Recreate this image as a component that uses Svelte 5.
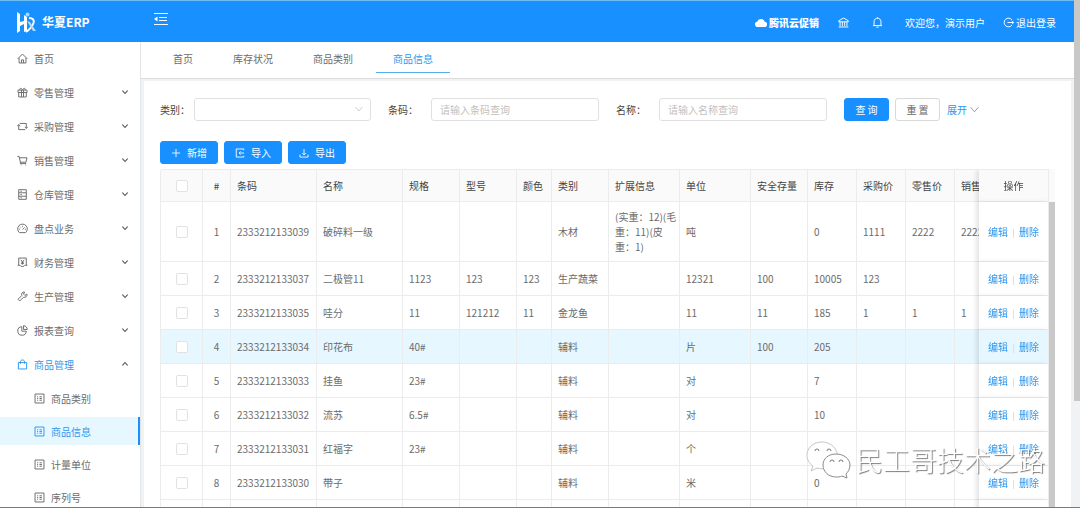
<script lang="ts">
  type Row = {
    code: string;
    name: string;
    spec?: string;
    model?: string;
    color?: string;
    category: string;
    extra?: string;
    unit: string;
    safe?: string;
    stock?: string;
    buy?: string;
    retail?: string;
    sale?: string;
  };

  const icons: Record<string, string> = {
    home: 'M1 8.5 8 1.5 15 8.5M3 7V14.5H13V7M6.5 14.5V10H9.5V14.5',
    gift: 'M1.5 4.5H14.5V8H1.5ZM2.5 8V14.5H13.5V8M6.5 4.5V14.5M9.5 4.5V14.5M8 4.5C7 1 3.5 1 4 4.5M8 4.5C9 1 12.5 1 12 4.5',
    retweet: 'M4 3.5H13.5V10M12 12.5H2.5V6M.5 7.5 2.5 5 4.5 7.5M11.5 8.5 13.5 11 15.5 8.5',
    cart: 'M.5 2H3L5 10.5H13L14.5 4H3.5M5 10.5 4.5 12.5H13.5M5.5 14.5H6.5M12 14.5H13',
    hdd: 'M2.5 1H13.5V15H2.5ZM2.5 5.5H13.5M2.5 10.5H13.5M5 3.3H7M5 8H7M5 12.8H7',
    dashboard: 'M3.5 14A7 7 0 1 1 12.5 14ZM8 9.5 11 6.5M3 9H4.5M11.5 9H13M8 4V5.5M4.5 5.5 5.5 6.5',
    account: 'M2.5 12V1.5H13.5V12M1 12H4.5C5 14.5 11 14.5 11.5 12H15M5.5 4 8 7 10.5 4M8 7V11M6 7.5H10M6 9.5H10',
    tool: 'M14.5 4.5 11.5 6.5 9.5 4.5 11 1.5C7.5 1 6 4 7 6.5L1.5 12 4 14.5 9.5 9C12.5 10 15 8 14.5 4.5Z',
    pie: 'M7 2.5A6.2 6.2 0 1 0 13.5 9H7ZM9.5 1V6.5H15C15 3.5 12.5 1 9.5 1Z',
    bag: 'M2 5H14V14.5H2ZM5 7V4C5 .5 11 .5 11 4V7',
    profile: 'M1.5 1.5H14.5V14.5H1.5ZM4.5 5.5H6M8 5.5H11.5M4.5 8H6M8 8H11.5M4.5 10.5H6M8 10.5H11.5',
    down: 'M1 4 8 12 15 4',
    up: 'M1 12 8 4 15 12',
    bank: 'M1 5.5 8 1.5 15 5.5V7H1ZM3 7V13M6.3 7V13M9.7 7V13M13 7V13M1 14.5H15',
    bell: 'M1.5 12.5H14.5M3 12.5V7C3 0 13 0 13 7V12.5M6.5 14.8H9.5M8 .5V2',
    logout: 'M13 4.2A6.3 6.3 0 1 0 13 11.8M6.5 8H15.5M13 5.5 15.5 8 13 10.5',
    plus: 'M8 1.5V14.5M1.5 8H14.5',
    import: 'M14 3.5V1.5H2V14.5H14V12.5M14.5 8H6.5M9 5.5 6.5 8 9 10.5',
    export: 'M8 1.5V11M5 8 8 11 11 8M1.5 10.5V14.5H14.5V10.5',
  };

  const menu = [
    { icon: 'gift', label: '零售管理' },
    { icon: 'retweet', label: '采购管理' },
    { icon: 'cart', label: '销售管理' },
    { icon: 'hdd', label: '仓库管理' },
    { icon: 'dashboard', label: '盘点业务' },
    { icon: 'account', label: '财务管理' },
    { icon: 'tool', label: '生产管理' },
    { icon: 'pie', label: '报表查询' },
    { icon: 'bag', label: '商品管理', children: ['商品类别', '商品信息', '计量单位', '序列号'] },
  ];

  const tabs = ['首页', '库存状况', '商品类别', '商品信息'];

  const columns: { key: keyof Row; title: string; width: number }[] = [
    { key: 'code', title: '条码', width: 86 },
    { key: 'name', title: '名称', width: 86 },
    { key: 'spec', title: '规格', width: 57 },
    { key: 'model', title: '型号', width: 57 },
    { key: 'color', title: '颜色', width: 35 },
    { key: 'category', title: '类别', width: 57 },
    { key: 'extra', title: '扩展信息', width: 71 },
    { key: 'unit', title: '单位', width: 71 },
    { key: 'safe', title: '安全存量', width: 57 },
    { key: 'stock', title: '库存', width: 49 },
    { key: 'buy', title: '采购价', width: 49 },
    { key: 'retail', title: '零售价', width: 49 },
    { key: 'sale', title: '销售价', width: 49 },
  ];

  const rows: Row[] = [
    { code: '2333212133039', name: '破碎料一级', category: '木材', extra: '(实重：12)(毛\n重：11)(皮\n重：1)', unit: '吨', stock: '0', buy: '1111', retail: '2222', sale: '2222' },
    { code: '2333212133037', name: '二极管11', spec: '1123', model: '123', color: '123', category: '生产蔬菜', unit: '12321', safe: '100', stock: '10005', buy: '123' },
    { code: '2333212133035', name: '哇分', spec: '11', model: '121212', color: '11', category: '金龙鱼', unit: '11', safe: '11', stock: '185', buy: '1', retail: '1', sale: '1' },
    { code: '2333212133034', name: '印花布', spec: '40#', category: '辅料', unit: '片', safe: '100', stock: '205' },
    { code: '2333212133033', name: '挂鱼', spec: '23#', category: '辅料', unit: '对', stock: '7' },
    { code: '2333212133032', name: '流苏', spec: '6.5#', category: '辅料', unit: '对', stock: '10' },
    { code: '2333212133031', name: '红福字', spec: '23#', category: '辅料', unit: '个' },
    { code: '2333212133030', name: '带子', spec: '', category: '辅料', unit: '米', stock: '0' },
  ];

  const activeTab = '商品信息';
  let hovered = $state(3);
</script>

{#snippet icon(name: string, size = 11)}
  <svg class="icon" width={size} height={size} viewBox="0 0 16 16" aria-hidden="true">
    <path d={icons[name]} />
  </svg>
{/snippet}

<div class="app">
  <div class="page">
    <header class="header">
      <div class="brand">
        <svg width="21" height="23" viewBox="0 0 21 23" aria-hidden="true">
          <path d="M1 1 4 3V11L8 10V4L11 6V20L8 21V13L4 15V20L1 22Z" fill="#fff" />
          <path d="M13 7C17 7 18.500 9 17.500 12C16 16 13 19 10 21" fill="none" stroke="#fff" stroke-width="2" />
          <path d="M11 10 14 11 20 20 17 20Z" fill="#b5d9fb" />
          <circle cx="11.500" cy="3.500" r="2" fill="#a6d6ff" />
        </svg>
        <h1>华夏ERP</h1>
      </div>
      <button class="bare fold" aria-label="收起菜单">
        <svg width="14" height="12" viewBox="0 0 14 12" aria-hidden="true">
          <path d="M0 .5H14M5 4.500H13M5 7.500H13M0 11.500H14" stroke="#fff" fill="none" />
          <path d="M3.500 3.500V8.500L0 6Z" fill="#fff" />
        </svg>
      </button>
      <nav class="user">
        <a class="promo" href="#promo">
          <svg width="12" height="9" viewBox="0 0 12 9" aria-hidden="true">
            <path d="M3 9A2.6 2.6 0 0 1 2.2 3.8 4 4 0 0 1 9.8 3.8 2.6 2.6 0 0 1 9.2 9Z" fill="#fff" />
          </svg>
          腾讯云促销
        </a>
        <a class="bank" href="#bank" aria-label="机构">{@render icon('bank')}</a>
        <button class="bare bell" aria-label="消息">{@render icon('bell')}</button>
        <span class="welcome">欢迎您，演示用户</span>
        <a class="logout" href="#logout">{@render icon('logout')}退出登录</a>
      </nav>
    </header>

    <div class="layout">
      <aside class="sider">
        <ul class="menu">
          <li class="root">
            <a class="item" href="#home">{@render icon('home')}<span>首页</span></a>
          </li>
          {#each menu as item}
            <li>
              <button class="bare item" class:open={item.children} aria-expanded={!!item.children}>
                {@render icon(item.icon)}
                <span>{item.label}</span>
                <i class="arrow">{@render icon(item.children ? 'up' : 'down', 6)}</i>
              </button>
              {#if item.children}
                <ul class="submenu">
                  {#each item.children as child}
                    <li>
                      <a class="item" class:selected={child === activeTab} href="#{child}">
                        {@render icon('profile')}<span>{child}</span>
                      </a>
                    </li>
                  {/each}
                </ul>
              {/if}
            </li>
          {/each}
        </ul>
      </aside>

      <main class="main">
        <nav class="tabs">
          {#each tabs as tab}
            <a class="tab" class:active={tab === activeTab} href="#{tab}">{tab}</a>
          {/each}
        </nav>

        <section class="card">
          <form class="search">
            <div class="field">
              <label class="short" for="category">类别：</label>
              <div class="select">
                <select id="category"><option></option></select>
                {@render icon('down', 8)}
              </div>
            </div>
            <div class="field">
              <label for="code">条码：</label>
              <input id="code" type="text" placeholder="请输入条码查询" />
            </div>
            <div class="field">
              <label for="name">名称：</label>
              <input id="name" type="text" placeholder="请输入名称查询" />
            </div>
            <div class="field actions">
              <button class="btn primary" type="button">查 询</button>
              <button class="btn" type="button">重 置</button>
              <a href="#more">展开{@render icon('down', 9)}</a>
            </div>
          </form>

          <div class="toolbar">
            <button class="btn primary">{@render icon('plus', 10)}新增</button>
            <button class="btn primary">{@render icon('import', 10)}导入</button>
            <button class="btn primary">{@render icon('export', 10)}导出</button>
          </div>

          <div class="table-box">
            <div class="table-scroll">
              <table>
                <colgroup>
                  <col style:width="42px" />
                  <col style:width="28px" />
                  {#each columns as col}
                    <col style:width="{col.width}px" />
                  {/each}
                  <col style:width="70px" />
                </colgroup>
                <thead>
                  <tr>
                    <th class="center"><input type="checkbox" aria-label="全选" /></th>
                    <th class="center">#</th>
                    {#each columns as col}
                      <th>{col.title}</th>
                    {/each}
                    <th class="center fixed">操作</th>
                  </tr>
                </thead>
                <tbody>
                  {#each rows as row, i}
                    <tr class:hover={hovered === i} onmouseenter={() => (hovered = i)}>
                      <td class="center"><input type="checkbox" aria-label={row.name} /></td>
                      <td class="center">{i + 1}</td>
                      {#each columns as col}
                        <td>{row[col.key] ?? ''}</td>
                      {/each}
                      <td class="center fixed">
                        <a href="#edit">编辑</a><i class="divider"></i><a href="#delete">删除</a>
                      </td>
                    </tr>
                  {/each}
                  <tr>
                    <td></td>
                    <td></td>
                    {#each columns as _}
                      <td></td>
                    {/each}
                    <td class="fixed"></td>
                  </tr>
                </tbody>
              </table>
            </div>
            <div class="table-bar"></div>
          </div>
        </section>
      </main>
    </div>
  </div>
  <div class="page-bar"><div class="thumb"></div></div>

  <div class="watermark">
    <svg width="46" height="38" viewBox="0 0 46 38" aria-hidden="true">
      <g fill="#fff" stroke="#8a8a8a" stroke-width="1">
        <path d="M16 1C7 1 1 7 1 14C1 19 3 22 7 25L5 30 11 27C14 28 17 28 20 27C32 25 33 15 30 9C27 4 22 1 16 1Z" stroke="#c4c4c4" />
        <path d="M30 13C22 13 17 18 17 24C17 31 23 36 30 36C32 36 34 36 36 35L41 37 40 33C42 31 44 28 44 24C44 18 38 13 30 13Z" />
      </g>
      <g fill="none" stroke="#777">
        <path d="M9 10a2 2 0 0 1 4 0M21 10a2 2 0 0 1 4 0M24 21a2 2 0 0 1 4 0M33 21a2 2 0 0 1 4 0" />
      </g>
    </svg>
    <span>民工哥技术之路</span>
  </div>
</div>

<style>
  :global(body) {
    margin: 0;
    background: #fff;
  }

  .app {
    --blue: #1890ff;
    --line: #ececec;
    position: relative;
    display: flex;
    height: 100vh;
    box-sizing: border-box;
    overflow: hidden;
    border-bottom: 1px solid #777b80;
    font: 10px/15px "Noto Sans CJK SC", "Noto Sans", sans-serif;
    color: #6b6b6b;
  }

  .app :global(*) {
    box-sizing: border-box;
  }

  a {
    color: inherit;
    text-decoration: none;
  }

  ul {
    list-style: none;
    margin: 0;
    padding: 0;
  }

  button,
  input,
  select {
    font: inherit;
    color: inherit;
  }

  .bare {
    padding: 0;
    border: 0;
    background: none;
    cursor: pointer;
  }

  .icon {
    flex: none;
    fill: none;
    stroke: currentColor;
    stroke-width: 1.4;
  }

  .page {
    flex: 1;
    min-width: 0;
    display: flex;
    flex-direction: column;
  }

  .page-bar {
    width: 6px;
    background: #f1f2f3;
  }

  .thumb {
    height: 79%;
    background: #c8c8c8;
  }

  /* header */
  .header {
    display: flex;
    align-items: center;
    height: 42px;
    flex: none;
    padding: 1px 18px 0 16px;
    border-top: 1px solid #6cbdf0;
    background: var(--blue);
    color: #fff;
  }

  .brand {
    display: flex;
    align-items: center;
    gap: 5px;
    width: 138px;
  }

  h1 {
    margin: 0;
    font-size: 12px;
    line-height: 20px;
    font-weight: 700;
  }

  .fold {
    display: flex;
    padding-bottom: 6px;
  }

  .user {
    display: flex;
    align-items: center;
    margin-left: auto;
  }

  .user a,
  .bell {
    display: flex;
    align-items: center;
  }

  .promo {
    gap: 2px;
    font-weight: 900;
  }

  .bank {
    margin-left: 19px;
  }

  .bell {
    margin: 0 22px 0 23px;
    color: #fff;
  }

  .welcome {
    margin-right: 18px;
  }

  .logout {
    gap: 2px;
  }

  .layout {
    flex: 1;
    min-height: 0;
    display: flex;
    background: #f0f2f3;
  }

  /* sidebar */
  .sider {
    width: 141px;
    flex: none;
    overflow: hidden;
    background: #fff;
    border-right: 1px solid #e3e6e8;
    margin-right: 3px;
  }

  .menu {
    padding-top: 2px;
  }

  .root {
    margin-bottom: 6px;
  }

  .item {
    display: flex;
    align-items: center;
    gap: 6px;
    width: 100%;
    height: 28px;
    margin-bottom: 6px;
    padding: 0 12px 0 17px;
    text-align: left;
  }

  .root .item {
    margin-bottom: 0;
  }

  .submenu .item {
    margin-bottom: 5px;
    padding-left: 34px;
  }

  .open {
    color: #2e97ee;
  }

  .selected {
    color: #2e97ee;
    background: #e6f7ff;
    border-right: 2px solid var(--blue);
  }

  .arrow {
    display: flex;
    margin-left: auto;
    color: #555;
  }

  .arrow .icon {
    stroke-width: 3;
  }

  /* tabs */
  .main {
    flex: 1;
    min-width: 0;
    display: flex;
    flex-direction: column;
  }

  .tabs {
    display: flex;
    gap: 6px;
    height: 37px;
    flex: none;
    margin-left: -3px;
    padding-left: 15px;
    border-bottom: 1px solid #dcdcdc;
    background: #fff;
  }

  .tab {
    height: 31px;
    padding: 9px 17px 0;
  }

  .tab.active {
    color: #2e97ee;
    border-bottom: 1px solid #55aee6;
  }

  .card {
    flex: 1;
    min-height: 0;
    display: flex;
    flex-direction: column;
    margin: 2px 3px 0 0;
    padding: 17px 16px 0;
    background: #fff;
  }

  /* search form */
  .search {
    display: grid;
    grid-template-columns: repeat(4, minmax(0, 1fr));
    gap: 17px;
  }

  .field {
    display: flex;
    align-items: center;
    height: 23px;
  }

  .field label {
    width: 43px;
    flex: none;
    color: #444;
    white-space: nowrap;
  }

  .field .short {
    width: 34px;
  }

  .field input,
  .field select {
    flex: 1;
    width: 100%;
    min-width: 0;
    height: 23px;
    padding: 0 8px;
    border: 1px solid #e0e0e0;
    border-radius: 3px;
    background: #fff;
    appearance: none;
    outline: none;
  }

  .field input::placeholder {
    color: #bfbfbf;
  }

  .select {
    position: relative;
    flex: 1;
    display: flex;
  }

  .select .icon {
    position: absolute;
    right: 8px;
    top: 7px;
    color: #bbb;
    pointer-events: none;
  }

  .btn {
    display: flex;
    align-items: center;
    justify-content: center;
    height: 23px;
    min-width: 45px;
    padding: 0 8px;
    border: 1px solid #d9d9d9;
    border-radius: 3px;
    background: #fff;
    white-space: nowrap;
    cursor: pointer;
  }

  .primary {
    border-color: var(--blue);
    background: var(--blue);
    color: #fff;
  }

  .actions {
    gap: 6px;
  }

  .actions a {
    display: flex;
    align-items: center;
    gap: 3px;
    margin-left: 1px;
    color: #2e97ee;
    white-space: nowrap;
  }

  .toolbar {
    display: flex;
    gap: 6px;
    margin: 20px 0 5px;
  }

  .toolbar .btn {
    width: 58px;
    gap: 6px;
  }

  /* table */
  .table-box {
    flex: 1;
    min-height: 0;
    display: flex;
  }

  .table-scroll {
    flex: 1;
    min-width: 0;
    overflow: hidden;
    border: 1px solid var(--line);
    border-width: 1px 0 0 1px;
    border-radius: 3px 0 0 0;
  }

  .table-bar {
    width: 6px;
    border-top: 33px solid #fafafa;
    background: #c9c9c9;
  }

  table {
    width: 913px;
    min-width: 100%;
    table-layout: fixed;
    border-collapse: separate;
    border-spacing: 0;
  }

  th,
  td {
    height: 34px;
    padding: 7px 0 7px 6px;
    border: 1px solid var(--line);
    border-width: 0 1px 1px 0;
    text-align: left;
    font-weight: 400;
    white-space: pre;
    background: #fff;
  }

  th {
    height: 32px;
    background: #fafafa;
    color: #444;
  }

  .center {
    padding-left: 0;
    text-align: center;
  }

  .hover td {
    background: #e6f7ff;
  }

  .fixed {
    position: sticky;
    right: 0;
    box-shadow: -3px 0 4px rgba(0, 0, 0, 0.1);
  }

  td a {
    color: #2e97ee;
  }

  .divider {
    display: inline-block;
    width: 1px;
    height: 9px;
    margin: 0 5px;
    vertical-align: middle;
    background: #e0e0e0;
  }

  input[type='checkbox'] {
    display: block;
    width: 12px;
    height: 12px;
    margin: 0 auto;
    border: 1px solid #e2e2e2;
    border-radius: 2px;
    background: #fff;
    appearance: none;
  }

  .watermark {
    position: absolute;
    right: 35px;
    bottom: 27px;
    display: flex;
    align-items: center;
    gap: 4px;
    font-size: 27px;
    line-height: 40px;
    font-weight: 300;
    color: #fff;
    text-shadow: 1px 1px 1px #777;
    pointer-events: none;
  }
</style>
